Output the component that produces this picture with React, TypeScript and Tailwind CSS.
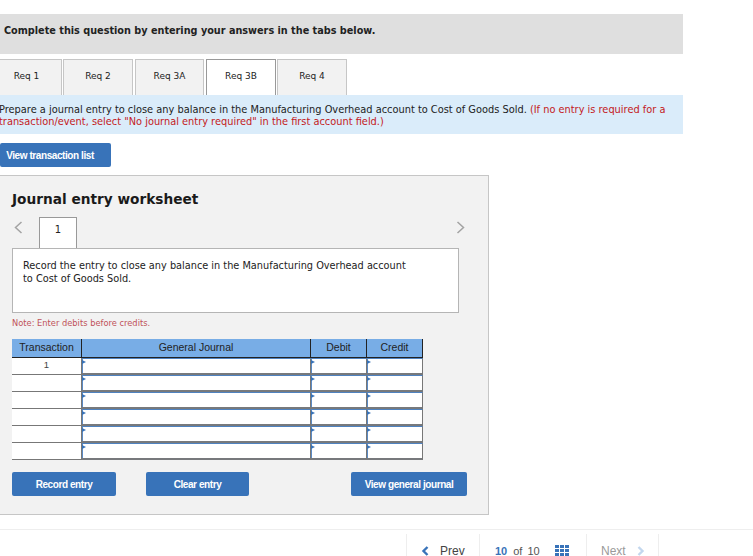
import React from "react";

const verdana = "font-['DejaVu_Sans',Verdana,sans-serif]";
const arial = "font-['Liberation_Sans',Arial,sans-serif]";

function Btn({ children, className }: { children: React.ReactNode; className: string }) {
  return (
    <div className={`flex h-6 items-center justify-center rounded-[2px] bg-[#3873b9] text-[10px] font-bold tracking-[-0.42px] text-white ${arial} ${className}`}>
      {children}
    </div>
  );
}

function Tab({ label, active, className }: { label: string; active?: boolean; className: string }) {
  return (
    <div className={`flex h-[36px] items-center justify-center border border-b-0 pb-px text-[9px] text-[#222] ${active ? "border-[#999] bg-white" : "border-[#c6c6c6] bg-[#f2f2f2]"} ${className}`}>
      {label}
    </div>
  );
}

function InputCell() {
  return (
    <div className="relative h-[17px] border-b-2 border-r border-t border-b-[#77797c] border-r-[#777] border-t-[#4f82c0] bg-white shadow-[inset_1px_0_0_#5b8ac4]">
      <span className="absolute left-0 top-[1px] h-0 w-0 border-y-[2.5px] border-l-[4px] border-y-transparent border-l-[#3873b9]" />
    </div>
  );
}

const headCell = "flex h-[19px] items-center justify-center border-b border-r border-b-[#222] border-r-[#222] bg-[#78ade6]";

export default function App() {
  return (
    <div className={`h-[556px] w-full overflow-hidden bg-white pt-[14px] ${verdana}`}>
      <div className="flex h-10 w-[683px] items-center bg-[#dfdfdf] pb-[6px] pl-1 text-[9.7px] font-bold text-[#222]">
        Complete this question by entering your answers in the tabs below.
      </div>
      <div className="mt-[5px] flex">
        <Tab label="Req 1" className="ml-[-6px] w-[68px] pr-[3px]" />
        <Tab label="Req 2" className="ml-px w-[70px]" />
        <Tab label="Req 3A" className="ml-[2px] w-[69px]" />
        <Tab label="Req 3B" active className="ml-[2px] w-[70px]" />
        <Tab label="Req 4" className="ml-px w-[70px]" />
      </div>
      <div className="h-[39px] w-[683px] overflow-hidden bg-[#daecfa] pt-[9px] text-[9.82px] leading-[12px] text-[#222]">
        <div className="ml-[-1px] w-[690px]">
          Prepare a journal entry to close any balance in the Manufacturing Overhead account to Cost of Goods Sold.{" "}
          <span className="text-[#c41a22]">(If no entry is required for a</span>
          <br />
          <span className="text-[#c41a22]">transaction/event, select "No journal entry required" in the first account field.)</span>
        </div>
      </div>
      <Btn className="mt-[9px] w-[111px] pr-[11px]">View transaction list</Btn>

      <div className="relative mt-[8px] h-[340px] w-[489px] border-y border-r border-[#c6c6c6] bg-[#f2f2f2] pl-3">
        <div className="pt-[14px] text-[13.7px] font-bold leading-[18px] text-[#1a1a1a]">Journal entry worksheet</div>

        <div className="mt-[9px] flex h-[31px]">
          <svg className="ml-[2px] mt-[4px] h-[13px] w-[9px]" viewBox="0 0 9 13" fill="none" stroke="#a3a3a3" strokeWidth="1.5">
            <path d="M7.5 1 1.5 6.5 7.5 12" />
          </svg>
          <div className="relative z-10 ml-[16px] flex h-[31px] w-[38px] items-center justify-center border border-b-0 border-[#999] bg-white pb-[7px] text-[10px] text-[#222]">
            1
          </div>
          <svg className="ml-[379px] mt-[4px] h-[13px] w-[9px]" viewBox="0 0 9 13" fill="none" stroke="#a3a3a3" strokeWidth="1.5">
            <path d="M1.5 1 7.5 6.5 1.5 12" />
          </svg>
        </div>
        <div className="h-[65px] w-[447px] border border-[#b5b5b5] bg-white pl-[10px] pr-2 pt-[10px] text-[9.75px] leading-[13px] text-[#222]">
          Record the entry to close any balance in the Manufacturing Overhead account
          <br />
          to Cost of Goods Sold.
        </div>
        <div className="mt-[5px] text-[8.3px] leading-[11px] text-[#c0535a]">Note: Enter debits before credits.</div>

        <div className={`mt-[10px] grid w-[411px] grid-cols-[70px_229px_56px_56px] text-[10.5px] text-[#222] ${arial}`}>
          <div className={headCell}>Transaction</div>
          <div className={headCell}>General Journal</div>
          <div className={headCell}>Debit</div>
          <div className={headCell}>Credit</div>
          {[0, 1, 2, 3, 4, 5].map((i) => (
            <React.Fragment key={i}>
              <div className="flex h-[17px] items-center justify-center border-b border-r border-b-[#777] border-r-[#777] bg-white pb-[2px] text-[9.5px] text-[#444]">{i === 0 ? "1" : ""}</div>
              <InputCell />
              <InputCell />
              <InputCell />
            </React.Fragment>
          ))}
        </div>

        <div className="mt-3 flex w-[455px]">
          <Btn className="w-[104px]">Record entry</Btn>
          <Btn className="ml-[30px] w-[103px]">Clear entry</Btn>
          <Btn className="ml-[102px] w-[116px]">View general journal</Btn>
        </div>
      </div>

      <div className={`mt-[14px] flex h-[27px] border-t border-[#eeeeee] pl-[406px] pt-[4px] text-[12px] leading-[14px] ${arial}`}>
        <div className="flex h-[23px] w-[73px] items-center border-l border-[#eeeeee] pl-[14px] pt-[10px] text-[#444]">
          <svg className="mr-[11px] h-[10px] w-[8px]" viewBox="0 0 8 10" fill="none" stroke="#3873b9" strokeWidth="2.4">
            <path d="M6.5 1 2.5 5 6.5 9" />
          </svg>
          Prev
        </div>
        <div className="flex h-[23px] w-[107px] items-center border-l border-[#eeeeee] pl-[15px] pt-[10px] text-[11px] text-[#555]">
          <span className="font-bold text-[#3873b9]">10</span>
          <span className="ml-[6px]">of</span>
          <span className="ml-[5px]">10</span>
          <svg className="ml-[15px] mt-[1px] h-[12px] w-[14px] shrink-0" viewBox="0 0 14 12" fill="#3873b9">
            <path d="M0 0h4v3H0zM5 0h4v3H5zM10 0h4v3h-4zM0 4h4v3H0zM5 4h4v3H5zM10 4h4v3h-4zM0 8h4v3H0zM5 8h4v3H5zM10 8h4v3h-4z" />
          </svg>
        </div>
        <div className="flex h-[23px] w-[73px] items-center border-x border-[#eeeeee] pl-[14px] pt-[10px] text-[#9a9a9a]">
          Next
          <svg className="ml-[11px] h-[10px] w-[8px]" viewBox="0 0 8 10" fill="none" stroke="#c3d7ee" strokeWidth="2.4">
            <path d="M1.5 1 5.5 5 1.5 9" />
          </svg>
        </div>
      </div>
    </div>
  );
}
